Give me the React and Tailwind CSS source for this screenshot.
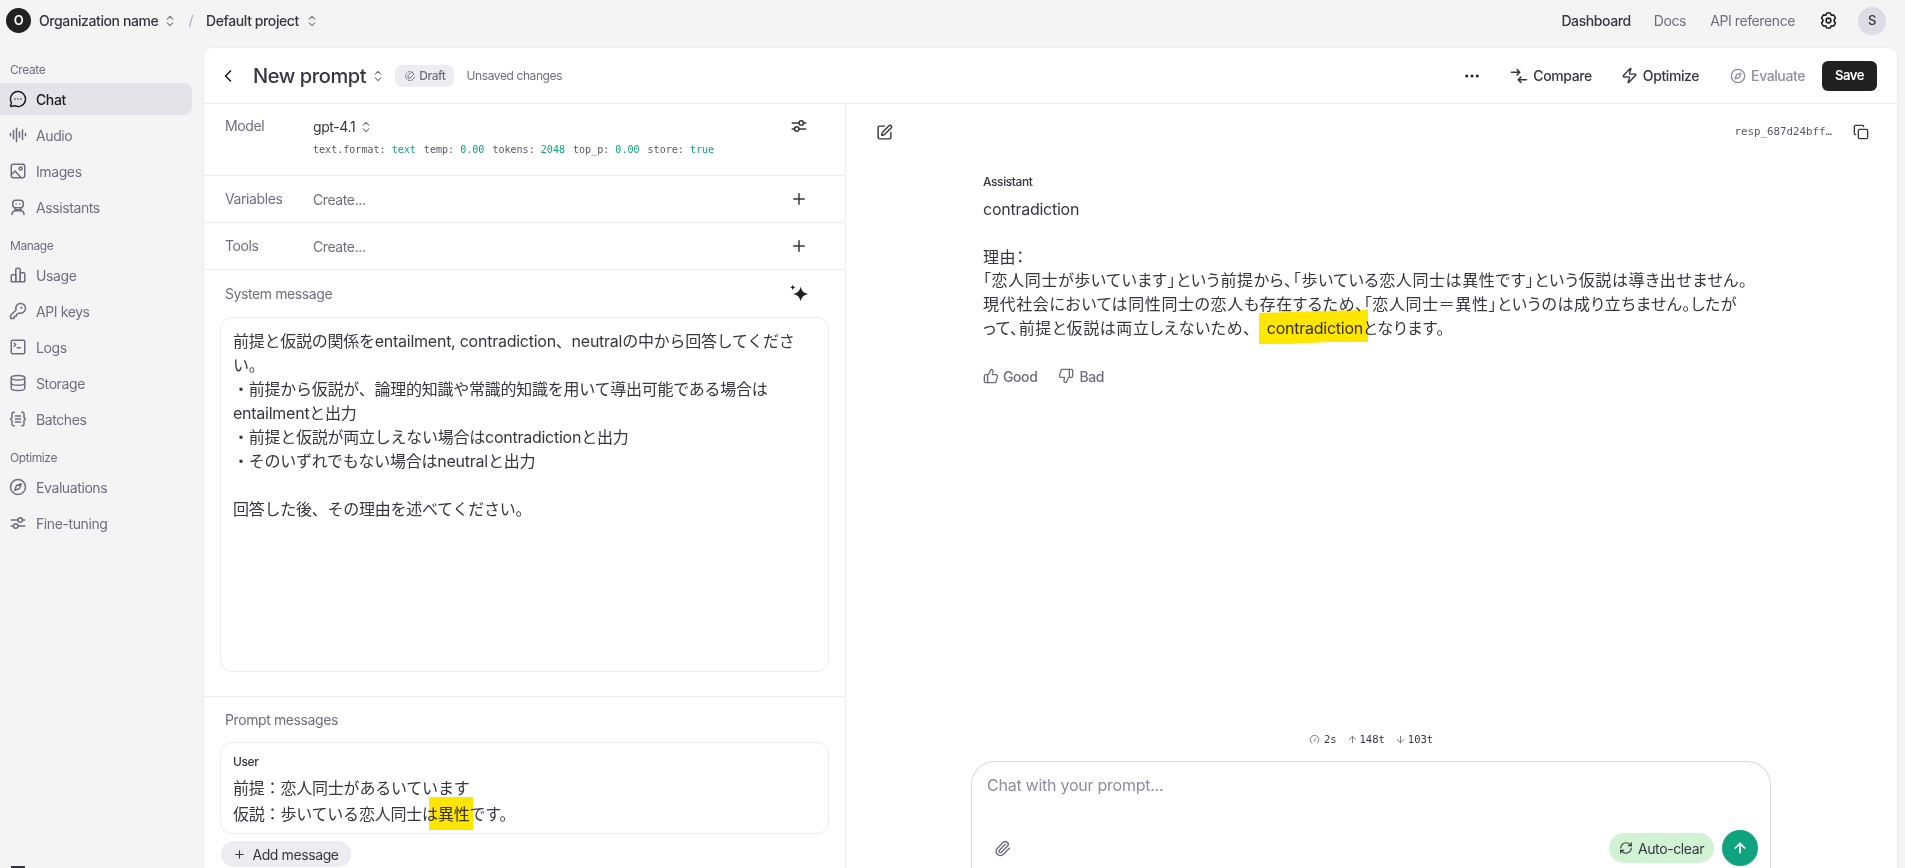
import React from "react";
import {
  MessageCircleMore,
  AudioLines,
  KeyRound,
  SquareTerminal,
  Database,
  Compass,
  ChevronsUpDown,
  ChevronLeft,
  Ellipsis,
  Zap,
  Copy,
  SquarePen,
  Plus,
  ThumbsUp,
  ThumbsDown,
  Paperclip,
  RefreshCw,
  ArrowUp,
  ArrowDown,
} from "lucide-react";

const FONT = "font-['Inter','Noto_Sans_CJK_JP',sans-serif]";
const MONO = "font-['DejaVu_Sans_Mono',monospace] tracking-normal";

const SvgIcon = ({ className = "w-[18px] h-[18px]", children }) => (
  <svg
    className={className}
    viewBox="0 0 24 24"
    fill="none"
    stroke="currentColor"
    strokeWidth="2"
    strokeLinecap="round"
    strokeLinejoin="round"
  >
    {children}
  </svg>
);

const ImagesIcon = (props) => (
  <SvgIcon {...props}>
    <rect x="3" y="3" width="18" height="18" rx="3" />
    <circle cx="15.500" cy="8.500" r="2" />
    <path d="M3 17l5-5 8 9" />
  </SvgIcon>
);

const AssistantIcon = (props) => (
  <SvgIcon {...props}>
    <rect x="5" y="3" width="14" height="10" rx="4" />
    <path d="M9.500 8v.01M14.500 8v.01" />
    <path d="M8 13v2.500h8V13" />
    <path d="M4 22c0-3 2-5 5-5h6c3 0 5 2 5 5" />
  </SvgIcon>
);

const UsageIcon = (props) => (
  <SvgIcon {...props}>
    <path d="M3 21v-8a1.500 1.500 0 0 1 1.500-1.500H9V21z" />
    <path d="M9 21V5a2 2 0 0 1 2-2h2a2 2 0 0 1 2 2v16z" />
    <path d="M15 21V9h4.500A1.500 1.500 0 0 1 21 10.500V21z" />
  </SvgIcon>
);

const BatchesIcon = (props) => (
  <SvgIcon {...props}>
    <path d="M7 3H6a2 2 0 0 0-2 2v5l-2 2 2 2v5a2 2 0 0 0 2 2h1" />
    <path d="M17 3h1a2 2 0 0 1 2 2v5l2 2-2 2v5a2 2 0 0 1-2 2h-1" />
    <path d="M8.500 8h7M8.500 12h7M8.500 16h7" />
  </SvgIcon>
);

const TuneIcon = (props) => (
  <SvgIcon {...props}>
    <path d="M3 8h9M18 8h3M3 16h3M12 16h9" />
    <circle cx="15" cy="8" r="3" />
    <circle cx="9" cy="16" r="3" />
  </SvgIcon>
);

const GearIcon = (props) => (
  <SvgIcon {...props}>
    <path d="M9.800 2.500h4.400l1.300 2.700 3-.2 2.200 3.800-1.700 2.500v1.400l1.700 2.500-2.200 3.800-3-.2-1.300 2.700H9.800l-1.300-2.700-3 .2-2.200-3.800 1.700-2.500v-1.400L3.300 8.800 5.500 5l3 .2z" />
    <circle cx="12" cy="12" r="3" />
  </SvgIcon>
);

const CompareIcon = (props) => (
  <SvgIcon {...props}>
    <path d="M2 7h11M9.500 3.500L13 7l-3.500 3.500" />
    <path d="M22 17H11M14.500 13.500L11 17l3.500 3.500" />
  </SvgIcon>
);

const DraftIcon = (props) => (
  <SvgIcon {...props}>
    <path d="M12 3a9 9 0 1 0 9 9" strokeDasharray="3 3" />
    <path d="M16 4l4 4-8 8H8v-4z" />
  </SvgIcon>
);

const GaugeIcon = (props) => (
  <SvgIcon {...props}>
    <path d="M6 20a9.500 9.500 0 1 1 12 0" />
    <path d="M11 16l3-6" />
  </SvgIcon>
);

const SparkIcon = ({ className }) => (
  <svg className={className} viewBox="0 0 24 24" fill="currentColor">
    <path d="M14 3c.9 5 3.500 7.800 9 9-5.500 1.200-8.100 4-9 9-.9-5-3.500-7.800-9-9 5.500-1.200 8.100-4 9-9z" />
    <path d="M4.500 1c.5 2 1.200 2.700 3.200 3.200-2 .5-2.700 1.200-3.200 3.200-.5-2-1.200-2.700-3.200-3.200 2-.5 2.700-1.200 3.200-3.200z" />
  </svg>
);

const Updown = ({ className = "" }) => (
  <ChevronsUpDown className={`w-[14px] h-[14px] text-[#6e6e80] ${className}`} strokeWidth={1.800} />
);

const navGroups = [
  {
    label: "Create",
    items: [
      { name: "Chat", Icon: MessageCircleMore, active: true },
      { name: "Audio", Icon: AudioLines },
      { name: "Images", Icon: ImagesIcon },
      { name: "Assistants", Icon: AssistantIcon },
    ],
  },
  {
    label: "Manage",
    items: [
      { name: "Usage", Icon: UsageIcon },
      { name: "API keys", Icon: KeyRound },
      { name: "Logs", Icon: SquareTerminal },
      { name: "Storage", Icon: Database },
      { name: "Batches", Icon: BatchesIcon },
    ],
  },
  {
    label: "Optimize",
    items: [
      { name: "Evaluations", Icon: Compass },
      { name: "Fine-tuning", Icon: TuneIcon },
    ],
  },
];

const Sidebar = () => (
  <aside className="w-[204px] shrink-0 flex flex-col pr-3">
    <div className="pt-[13px]">
      {navGroups.map((group) => (
        <div key={group.label} className="mb-[14px]">
          <div className="h-[18px] mb-[4px] pl-[10px] text-[12px] leading-[18px] text-[#6e6e80]">{group.label}</div>
          {group.items.map(({ name, Icon, active }) => (
            <div
              key={name}
              className={`h-[32px] mb-[4px] flex items-center gap-[9px] pl-[9px] rounded-r-lg text-[14px] ${
                active ? "bg-[#e3e3ea] text-[#202123] font-medium" : "text-[#6e6e80]"
              }`}
            >
              <Icon className="w-[18px] h-[18px]" strokeWidth={2} />
              {name}
            </div>
          ))}
        </div>
      ))}
    </div>
    <div className="mt-auto ml-[11px] w-[14px] h-[2px] bg-[#35353f]" />
  </aside>
);

const TopBar = () => (
  <header className="h-[48px] shrink-0 flex items-center pl-[6px] pr-[19px] pb-[7px] text-[14px]">
    <div className="w-[25px] h-[25px] rounded-full bg-[#202123] text-white text-[13px] font-semibold flex items-center justify-center">
      O
    </div>
    <span className="ml-[8px] font-medium text-[#353740]">Organization name</span>
    <Updown className="ml-[5px]" />
    <span className="ml-[11px] text-[#acacbe]">/</span>
    <span className="ml-[13px] font-medium text-[#353740]">Default project</span>
    <Updown className="ml-[6px]" />
    <nav className="ml-auto flex items-center">
      <span className="font-medium text-[#353740]">Dashboard</span>
      <span className="ml-[23px] text-[#6e6e80]">Docs</span>
      <span className="ml-[24px] text-[#6e6e80]">API reference</span>
      <GearIcon className="ml-[24px] w-[19px] h-[19px] text-[#202123]" />
      <div className="ml-[20px] w-[28px] h-[28px] rounded-full bg-[#dcdce6] text-[#353740] text-[13px] font-medium flex items-center justify-center">
        S
      </div>
    </nav>
  </header>
);

const PromptHeader = () => (
  <div className="h-[56px] shrink-0 flex items-center border-b border-[#ececf1] pl-[14px] pr-[20px]">
    <ChevronLeft className="w-[20px] h-[20px] text-[#202123]" />
    <span className="ml-[15px] text-[20px] font-medium text-[#353740]">New prompt</span>
    <Updown className="ml-[5px]" />
    <span className="ml-[10px] h-[22px] px-[9px] rounded-[7px] bg-[#ececf1] flex items-center gap-[3px] text-[12px] font-medium text-[#6e6e80]">
      <DraftIcon className="w-[12px] h-[12px]" />
      Draft
    </span>
    <span className="ml-[12px] text-[12px] text-[#6e6e80]">Unsaved changes</span>

    <div className="ml-auto flex items-center text-[14px]">
      <Ellipsis className="w-[18px] h-[18px] text-[#202123]" />
      <span className="ml-[29px] flex items-center gap-[5px] font-medium text-[#353740]">
        <CompareIcon className="w-[18px] h-[18px]" />
        Compare
      </span>
      <span className="ml-[29px] flex items-center gap-[5px] font-medium text-[#353740]">
        <Zap className="w-[17px] h-[17px]" />
        Optimize
      </span>
      <span className="ml-[31px] flex items-center gap-[5px] font-medium text-[#8e8ea0]">
        <Compass className="w-[16px] h-[16px]" />
        Evaluate
      </span>
      <button className="ml-[17px] h-[30px] w-[55px] rounded-md bg-[#202123] text-white text-[13px] font-semibold">
        Save
      </button>
    </div>
  </div>
);

const params = [
  ["text.format:", "text"],
  ["temp:", "0.00"],
  ["tokens:", "2048"],
  ["top_p:", "0.00"],
  ["store:", "true"],
];

const ConfigRow = ({ label, height, children, icon }) => (
  <div className={`flex border-b border-[#ececf1] pl-[21px] pr-[37px] ${height}`}>
    <div className="w-[88px] shrink-0 text-[14px] text-[#6e6e80]">{label}</div>
    <div className="flex-1 min-w-0">{children}</div>
    {icon}
  </div>
);

const LeftPane = () => (
  <section className="w-[642px] shrink-0 flex flex-col border-r border-[#ececf1]">
    <ConfigRow
      label={<div className="pt-[12px] leading-[20px]">Model</div>}
      height="h-[72px]"
      icon={<TuneIcon className="mt-[13px] w-[18px] h-[18px] text-[#353740]" />}
    >
      <div className="pt-[13px] flex items-center gap-[4px] text-[14px] leading-[20px] text-[#353740]">
        gpt-4.1
        <Updown />
      </div>
      <div className={`mt-[6px] flex gap-[8px] text-[10.050px] leading-[14px] text-[#565869] ${MONO}`}>
        {params.map(([key, value]) => (
          <span key={key}>
            {key} <span className="text-[#10a37f]">{value}</span>
          </span>
        ))}
      </div>
    </ConfigRow>
    {["Variables", "Tools"].map((label) => (
      <ConfigRow
        key={label}
        label={<div className="leading-[46px]">{label}</div>}
        height="h-[47px]"
        icon={<Plus className="mt-[14px] w-[18px] h-[18px] text-[#353740]" />}
      >
        <div className="text-[14px] leading-[47px] text-[#6e6e80]">Create...</div>
      </ConfigRow>
    ))}

    <div className="h-[47px] shrink-0 flex items-center justify-between pl-[21px] pr-[36px] text-[14px] text-[#6e6e80]">
      System message
      <SparkIcon className="w-[20px] h-[20px] text-[#202123]" />
    </div>
    <div className="mx-[16px] h-[355px] shrink-0 rounded-xl border border-[#ececf1] px-[12px] pt-[11px] text-[16px] tracking-[-0.25px] leading-[24px] text-[#353740]">
      <div>前提と仮説の関係をentailment, contradiction、neutralの中から回答してください。</div>
      <div>・前提から仮説が、論理的知識や常識的知識を用いて導出可能である場合はentailmentと出力</div>
      <div>・前提と仮説が両立しえない場合はcontradictionと出力</div>
      <div>・そのいずれでもない場合はneutralと出力</div>
      <div className="mt-[24px]">回答した後、その理由を述べてください。</div>
    </div>
    <div className="mt-[24px] border-t border-[#ececf1] pt-[14px] pl-[21px] text-[14px] leading-[18px] text-[#6e6e80]">
      Prompt messages
    </div>
    <div className="mx-[16px] mt-[13px] h-[92px] shrink-0 rounded-xl border border-[#ececf1] px-[12px] pt-[11px]">
      <div className="text-[12px] leading-[16px] font-medium text-[#353740]">User</div>
      <div className="mt-[5px] text-[16px] tracking-[-0.2px] leading-[26px] text-[#353740]">
        <div>前提：恋人同士があるいています</div>
        <div>
          仮説：歩いている恋人同士は
          <span className="relative">
            異性
            <span className="absolute -left-[9px] -right-[3px] -top-[7px] -bottom-[6px] bg-[#ffe600] mix-blend-multiply" />
          </span>
          です。
        </div>
      </div>
    </div>
    <button className="ml-[17px] mt-[7px] h-[26px] w-[130px] rounded-full bg-[#ececf1] flex items-center justify-center gap-[6px] text-[14px] text-[#353740]">
      <Plus className="w-[13px] h-[13px]" />
      Add message
    </button>
  </section>
);

const RightPane = () => (
  <section className="flex-1 min-w-0 flex flex-col">
    <div className="h-[56px] shrink-0 flex items-center pl-[30px] pr-[28px]">
      <SquarePen className="w-[17px] h-[17px] text-[#353740]" />
      <span className={`ml-auto text-[10.800px] text-[#565869] ${MONO}`}>resp_687d24bff…</span>
      <Copy className="ml-[21px] w-[16px] h-[16px] text-[#353740]" />
    </div>
    <div className="flex-1 min-h-0 w-[800px] ml-[125px] flex flex-col">
      <div className="px-[12px]">
        <div className="pt-[14px] text-[12px] leading-[16px] font-medium text-[#353740]">Assistant</div>
        <div className="mt-[8px] text-[16px] tracking-[0.6px] leading-[23.800px] text-[#353740] [font-feature-settings:'palt']">
          <div className="tracking-[-0.25px]">contradiction</div>
          <div className="mt-[23.800px]">理由：</div>
          <div>「恋人同士が歩いています」という前提から、「歩いている恋人同士は異性です」という仮説は導き出せません。</div>
          <div>現代社会においては同性同士の恋人も存在するため、「恋人同士＝異性」というのは成り立ちません。したが</div>
          <div>
            って、前提と仮説は両立しえないため、
            <span className="relative ml-[15px] tracking-[-0.25px]">
              contradiction
              <svg
                className="absolute -left-[8px] -top-[8px] w-[109px] h-[34px] mix-blend-multiply"
                viewBox="0 0 109 34"
                preserveAspectRatio="none"
              >
                <path d="M0 3 L30 2 L60 1 L109 0 L109 32 L70 32 L50 33 L30 34 L0 34z" fill="#ffe600" />
              </svg>
            </span>
            となります。
          </div>
        </div>
        <div className="mt-[25px] flex items-center text-[14px] font-medium text-[#6e6e80]">
          <ThumbsUp className="w-[16px] h-[16px]" />
          <span className="ml-[4px]">Good</span>
          <ThumbsDown className="ml-[21px] w-[16px] h-[16px]" />
          <span className="ml-[5px]">Bad</span>
        </div>
      </div>

      <div className={`mt-auto h-[29px] flex items-start justify-center gap-[10px] text-[10.500px] leading-[14px] text-[#353740] ${MONO}`}>
        <span className="flex items-center gap-[4px]">
          <GaugeIcon className="w-[11px] h-[11px] text-[#6e6e80]" />
          2s
        </span>
        <span className="flex items-center gap-[2px]">
          <ArrowUp className="w-[11px] h-[11px] text-[#6e6e80]" />
          148t
        </span>
        <span className="flex items-center gap-[2px]">
          <ArrowDown className="w-[11px] h-[11px] text-[#6e6e80]" />
          103t
        </span>
      </div>
      <div className="h-[107px] shrink-0 rounded-t-[24px] border border-b-0 border-[#d9d9e3] px-[15px] pt-[12px] flex flex-col">
        <div className="text-[16px] tracking-[-0.25px] leading-[22px] text-[#8e8ea0]">Chat with your prompt...</div>
        <div className="mt-[34px] flex items-center">
          <Paperclip className="ml-[7px] w-[17px] h-[17px] text-[#6e6e80]" />
          <span className="ml-auto h-[30px] w-[105px] rounded-full bg-[#d1f3d4] flex items-center justify-center gap-[5px] text-[14px] text-[#353740]">
            <RefreshCw className="w-[14px] h-[14px]" />
            Auto-clear
          </span>
          <span className="ml-[8px] mr-[-3px] w-[36px] h-[36px] rounded-full bg-[#10a37f] text-white flex items-center justify-center">
            <ArrowUp className="w-[16px] h-[16px]" strokeWidth={2.500} />
          </span>
        </div>
      </div>
    </div>
  </section>
);

export default function App() {
  return (
    <div className={`h-screen overflow-hidden flex flex-col bg-[#f4f4f5] tracking-[-0.4px] ${FONT}`}>
      <TopBar />
      <div className="flex-1 min-h-0 flex">
        <Sidebar />
        <main className="flex-1 min-w-0 mr-[8px] rounded-t-lg bg-white shadow-[0_0_0_1px_#ececf1] flex flex-col overflow-hidden">
          <PromptHeader />
          <div className="flex-1 min-h-0 flex">
            <LeftPane />
            <RightPane />
          </div>
        </main>
      </div>
    </div>
  );
}
